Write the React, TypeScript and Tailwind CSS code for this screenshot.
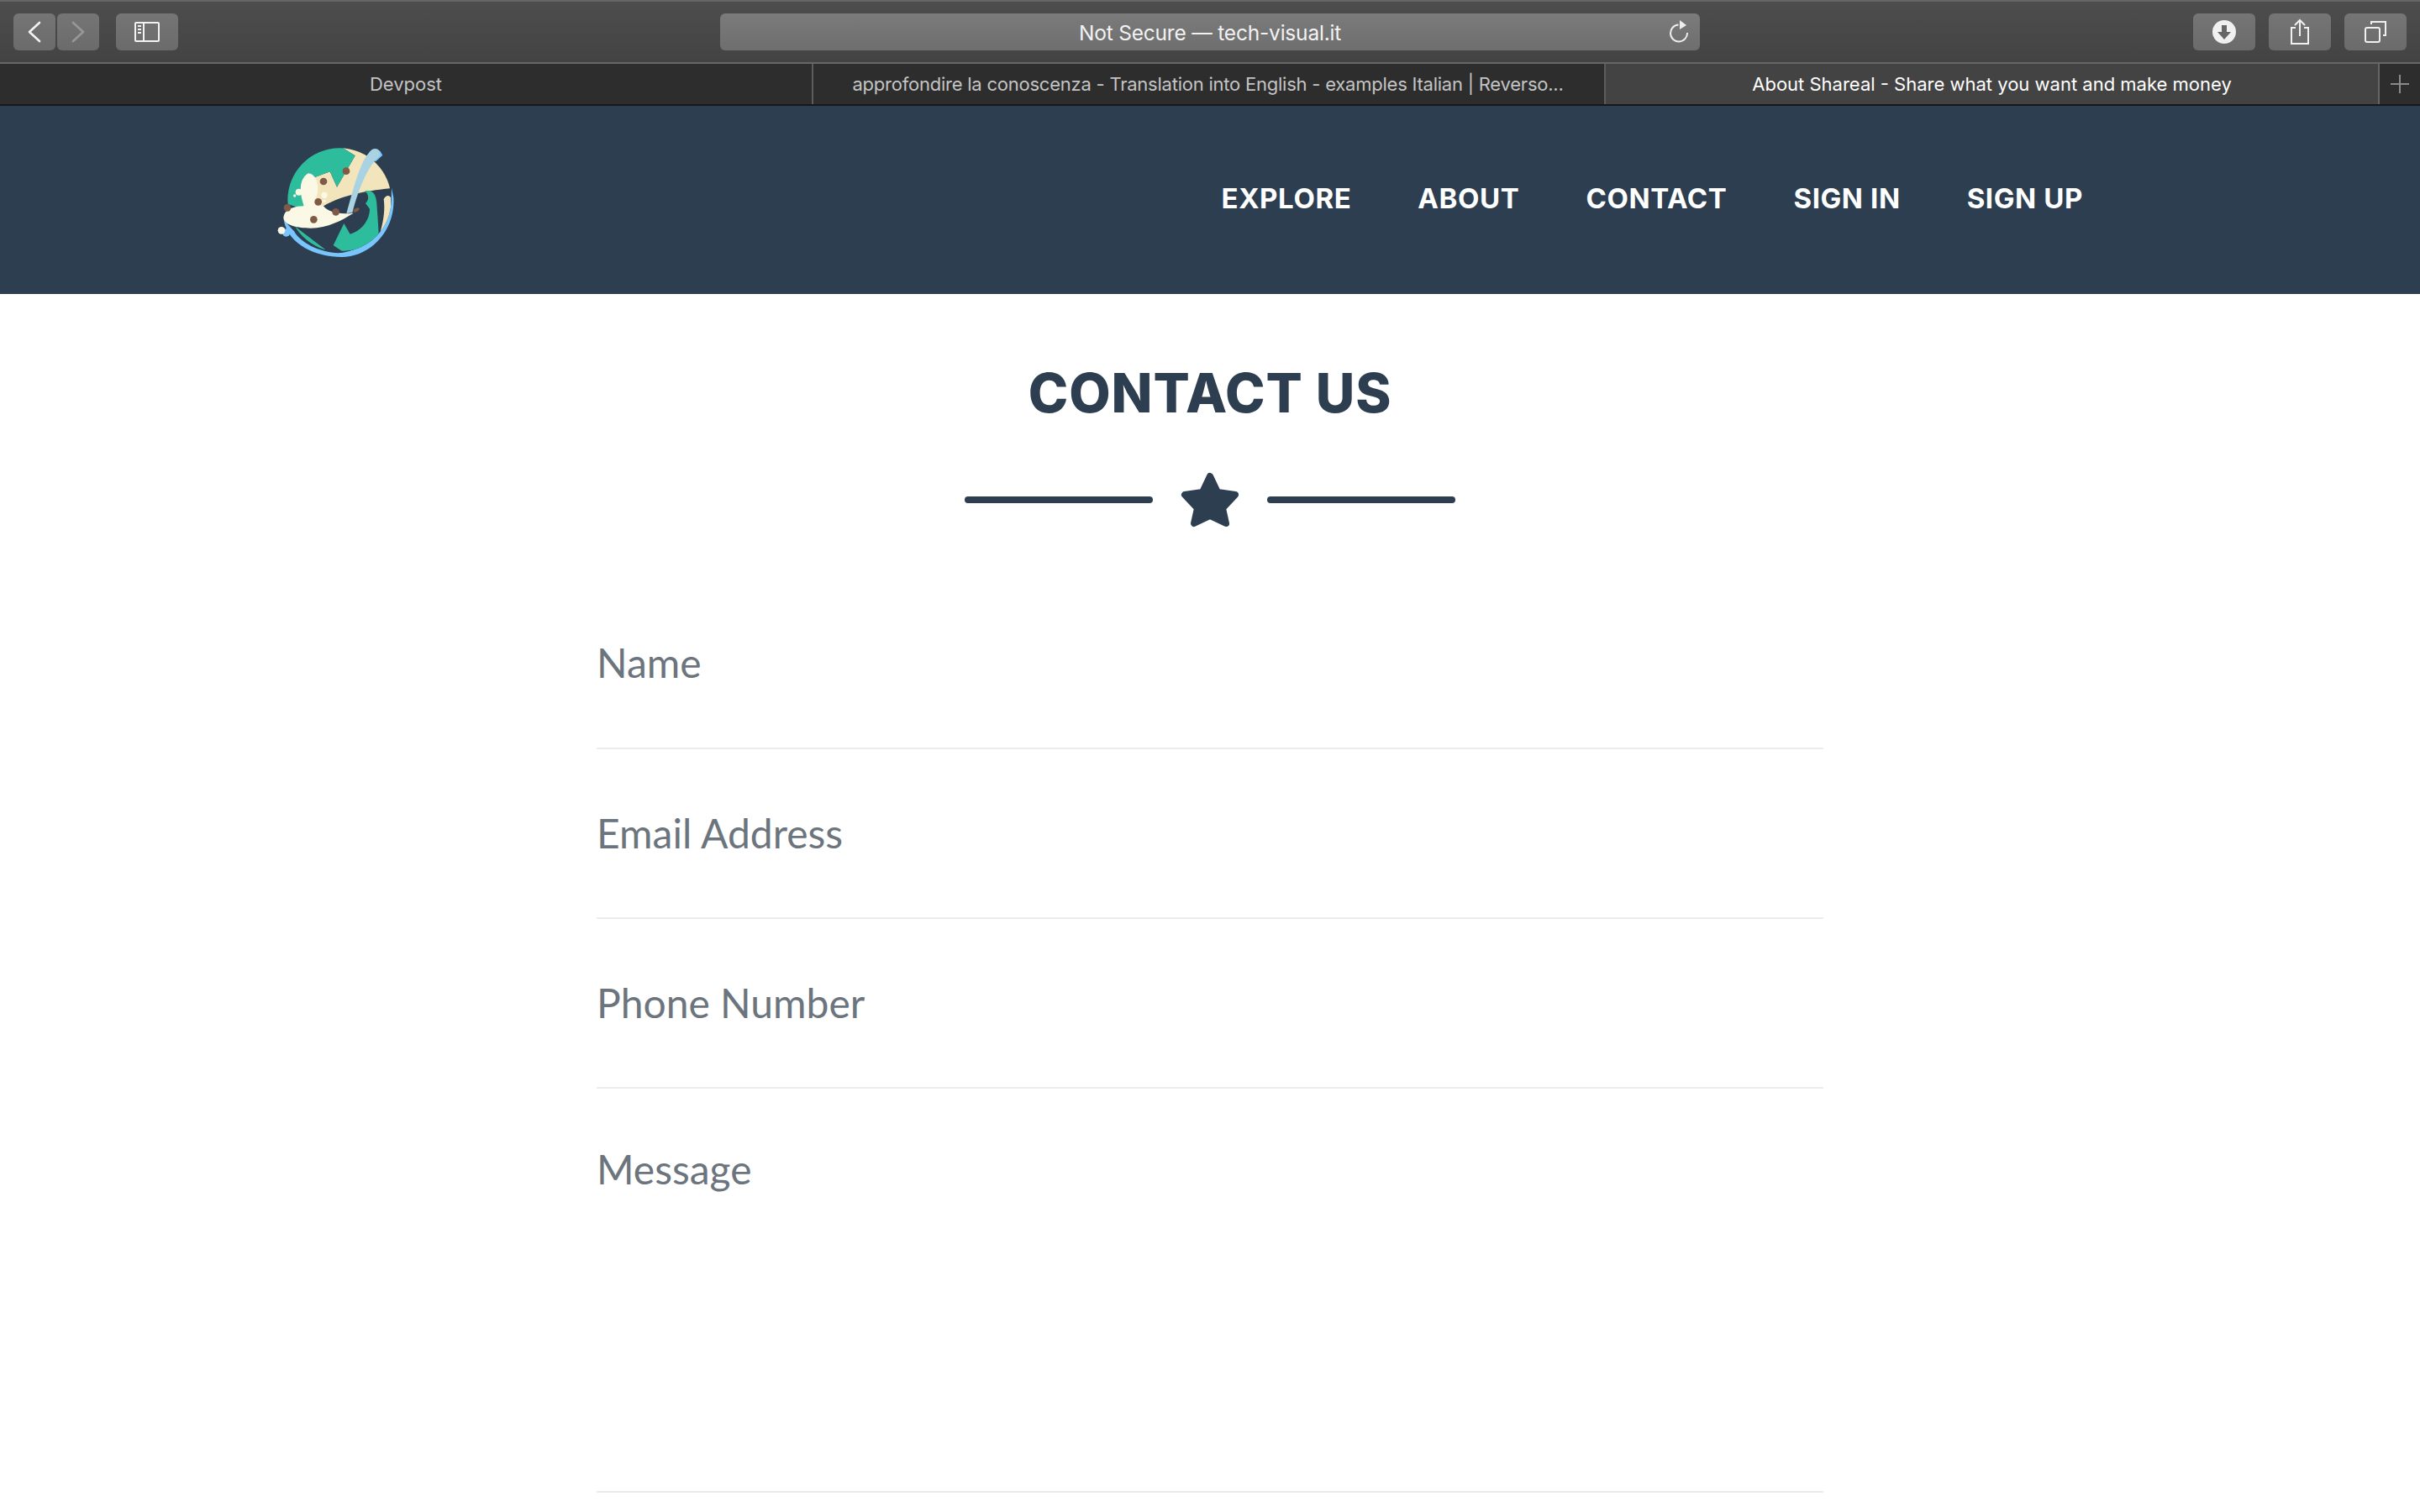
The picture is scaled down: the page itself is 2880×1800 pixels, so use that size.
import React from 'react';

const NAV_LINKS = ['EXPLORE', 'ABOUT', 'CONTACT', 'SIGN IN', 'SIGN UP'];

const ChromeButton: React.FC<{ className?: string; children: React.ReactNode }> = ({ className = 'w-[74px]', children }) => (
  <div className={`h-[44px] ${className} flex items-center justify-center rounded-[6px] bg-gradient-to-b from-[#757575] to-[#6b6b6b]`}>
    {children}
  </div>
);

const Logo = () => (
  <svg width="200" height="170" viewBox="0 0 600 510" className="shrink-0 mb-[3px]">
    <defs>
      <clipPath id="globe">
        <circle cx="312" cy="258" r="185" />
      </clipPath>
    </defs>
    <path d="M113 330C130 420 230 462 320 462C420 462 512 370 505 250L498 215C500 330 430 430 320 447C250 452 170 410 150 370Z" fill="#78c6fd" />
    <circle cx="122" cy="375" r="14" fill="#78c6fd" />
    <circle cx="105" cy="367" r="13" fill="#fbf8e6" />
    <g clipPath="url(#globe)">
      <rect x="100" y="50" width="420" height="420" fill="#2d3e50" />
      <path d="M320 70L510 70L510 215C440 222 330 235 255 280L180 300L150 250L222 178L278 157L303 212L368 100Z" fill="#f3e5bb" />
      <path d="M320 70L368 100L303 212L278 157L222 178L180 290L120 270L120 70Z" fill="#2ebd9c" />
      <path d="M150 350L262 436L200 445L140 400Z" fill="#2ebd9c" />
      <path d="M402 226C430 220 442 235 445 270C448 320 452 360 452 385C420 425 370 442 320 440L290 420L328 342L350 380C392 368 420 330 420 290L405 270C418 258 418 238 402 226Z" fill="#2ebd9c" />
      <path d="M470 255C478 240 490 240 495 250L495 330C485 350 470 365 458 372C470 330 475 290 470 255Z" fill="#f3e5bb" />
    </g>
    <path d="M440 122L466 98L456 82L436 96Z" fill="#78c6fd" />
    <path d="M337 306C362 220 385 115 428 78C448 68 462 84 455 102C420 130 385 200 358 304Z" fill="#a9d2e3" />
    <path d="M112 320C115 292 150 280 185 280C170 235 165 185 200 163C232 165 240 210 232 240L222 270C240 282 250 276 255 280C270 300 310 312 362 305C320 332 260 365 190 358C150 355 112 345 112 320Z" fill="#fbf8e6" />
    <circle cx="167" cy="230" r="12" fill="#fbf8e6" />
    <circle cx="152" cy="243" r="5" fill="#fbf8e6" />
    <circle cx="258" cy="241" r="11" fill="#fbf8e6" />
    <circle cx="258" cy="262" r="5" fill="#fbf8e6" />
    <g fill="#7f5a47">
      <circle cx="336" cy="155" r="13" />
      <circle cx="255" cy="192" r="13" />
      <circle cx="236" cy="265" r="13" />
      <circle cx="126" cy="286" r="13" />
      <circle cx="299" cy="301" r="13" />
      <circle cx="220" cy="328" r="13" />
      <ellipse cx="372" cy="294" rx="12" ry="6" transform="rotate(-30 372 294)" />
    </g>
  </svg>
);

const Field: React.FC<{ label: string; className: string }> = ({ label, className }) => (
  <div className={`${className} border-b-2 border-[#e9ecef] text-[48px] leading-[58px] text-[#6c757d]`}>{label}</div>
);

export default function App() {
  return (
    <div className="h-[1800px] overflow-hidden bg-white flex flex-col">
      {/* safari toolbar */}
      <div className="h-[76px] shrink-0 flex items-center px-4 bg-gradient-to-b from-[#4d4d4d] to-[#434343] border-t-2 border-t-[#666666] border-b-2 border-b-[#666666] font-['Inter',sans-serif]">
        <div className="w-[841px] flex items-center">
          <ChromeButton className="w-[50px]">
            <svg width="16" height="26" viewBox="0 0 16 26" fill="none" stroke="#f2f2f2" strokeWidth="2.6" strokeLinecap="round" strokeLinejoin="round">
              <path d="M14 2L2 13L14 24" />
            </svg>
          </ChromeButton>
          <ChromeButton className="w-[50px] ml-[2px]">
            <svg width="16" height="26" viewBox="0 0 16 26" fill="none" stroke="#989898" strokeWidth="2.6" strokeLinecap="round" strokeLinejoin="round">
              <path d="M2 2L14 13L2 24" />
            </svg>
          </ChromeButton>
          <ChromeButton className="w-[74px] ml-[20px]">
            <svg width="30" height="24" viewBox="0 0 30 24" fill="none" stroke="#f2f2f2" strokeWidth="2">
              <rect x="1" y="1" width="28" height="22" rx="1" />
              <path d="M11 1V23" />
              <path d="M4 5H8M4 9H8M4 13H8" />
            </svg>
          </ChromeButton>
        </div>
        <div className="w-[1166px] h-[44px] rounded-[6px] bg-gradient-to-b from-[#7b7b7b] to-[#6e6e6e] flex items-center relative">
          <span className="flex-1 text-center text-[24.5px] pt-[2px] text-[#f2f2f2] tracking-[-0.2px]">Not Secure — tech-visual.it</span>
          <svg width="24" height="34" viewBox="0 0 24 34" fill="none" className="absolute right-[12px] top-[3px]">
            <path d="M10.5 10.5A10 10 0 1 0 21 20" stroke="#eeeeee" strokeWidth="2" />
            <path d="M12 5L20 11L12 16Z" fill="#eeeeee" />
          </svg>
        </div>
        <div className="ml-auto flex items-center gap-4">
          <ChromeButton>
            <svg width="28" height="28" viewBox="0 0 28 28">
              <circle cx="14" cy="14" r="14" fill="#f0f0f0" />
              <path d="M11 6H17V14H22L14 23L6 14H11Z" fill="#666666" />
            </svg>
          </ChromeButton>
          <ChromeButton>
            <svg width="24" height="32" viewBox="0 0 24 32" fill="none" stroke="#f0f0f0" strokeWidth="2">
              <path d="M7 11H2V30H22V11H17" />
              <path d="M12 21V2M6 8L12 2L18 8" />
            </svg>
          </ChromeButton>
          <ChromeButton>
            <svg width="26" height="26" viewBox="0 0 26 26" fill="none" stroke="#f0f0f0" strokeWidth="2">
              <rect x="1" y="8" width="17" height="17" rx="2" />
              <path d="M8 4V1H25V17H22" />
            </svg>
          </ChromeButton>
        </div>
      </div>

      {/* tab bar */}
      <div className="h-[50px] shrink-0 flex bg-[#2d2d2d] border-b-2 border-b-[#15181b] font-['Inter',sans-serif] text-[22px] leading-[48px] text-center">
        <div className="w-[968px] text-[#c4c4c4] border-r-2 border-[#5c5c5c]">Devpost</div>
        <div className="w-[943px] pr-[2px] text-[#c4c4c4] border-r-2 border-[#5c5c5c] tracking-[-0.23px]">approfondire la conoscenza - Translation into English - examples Italian | Reverso...</div>
        <div className="w-[921px] bg-[#434343] text-white border-r-2 border-[#666666]">About Shareal - Share what you want and make money</div>
        <div className="flex-1 flex items-center justify-center">
          <svg width="22" height="22" viewBox="0 0 22 22" stroke="#8a8a8a" strokeWidth="2">
            <path d="M11 0V22M0 11H22" />
          </svg>
        </div>
      </div>

      {/* site header */}
      <header className="h-[224px] shrink-0 bg-[#2c3e50] flex items-center pl-[300px] pr-[401px]">
        <Logo />
        <nav className="ml-auto flex gap-[79px] text-[33px] font-bold tracking-[0.6px] text-white font-['Inter',sans-serif] pb-[3px]">
          {NAV_LINKS.map(link => (
            <span key={link}>{link}</span>
          ))}
        </nav>
      </header>

      {/* contact section */}
      <main className="flex-1 flex flex-col items-center pt-[78px]">
        <h2 className="text-[64px] leading-[80px] font-extrabold tracking-[0.9px] text-[#2c3e50] font-['Inter',sans-serif]">CONTACT US</h2>
        <div className="mt-[54px] flex items-center">
          <div className="w-[224px] h-[8px] rounded-full bg-[#2c3e50]" />
          <svg width="70" height="66" viewBox="0 0 70 66" className="mx-[33px]">
            <path d="M35 5L44 24L65 27L50 43L54 61L35 52L16 61L20 43L5 27L26 24Z" fill="#2c3e50" stroke="#2c3e50" strokeWidth="8" strokeLinejoin="round" />
          </svg>
          <div className="w-[224px] h-[8px] rounded-full bg-[#2c3e50]" />
        </div>
        <form className="w-[1460px] mt-[122px] font-['Lato',sans-serif]">
          <Field label="Name" className="h-[142px] pt-[10px]" />
          <Field label="Email Address" className="h-[202px] pt-[71px]" />
          <Field label="Phone Number" className="h-[202px] pt-[71px]" />
          <Field label="Message" className="h-[481px] pt-[67px]" />
        </form>
      </main>
    </div>
  );
}
